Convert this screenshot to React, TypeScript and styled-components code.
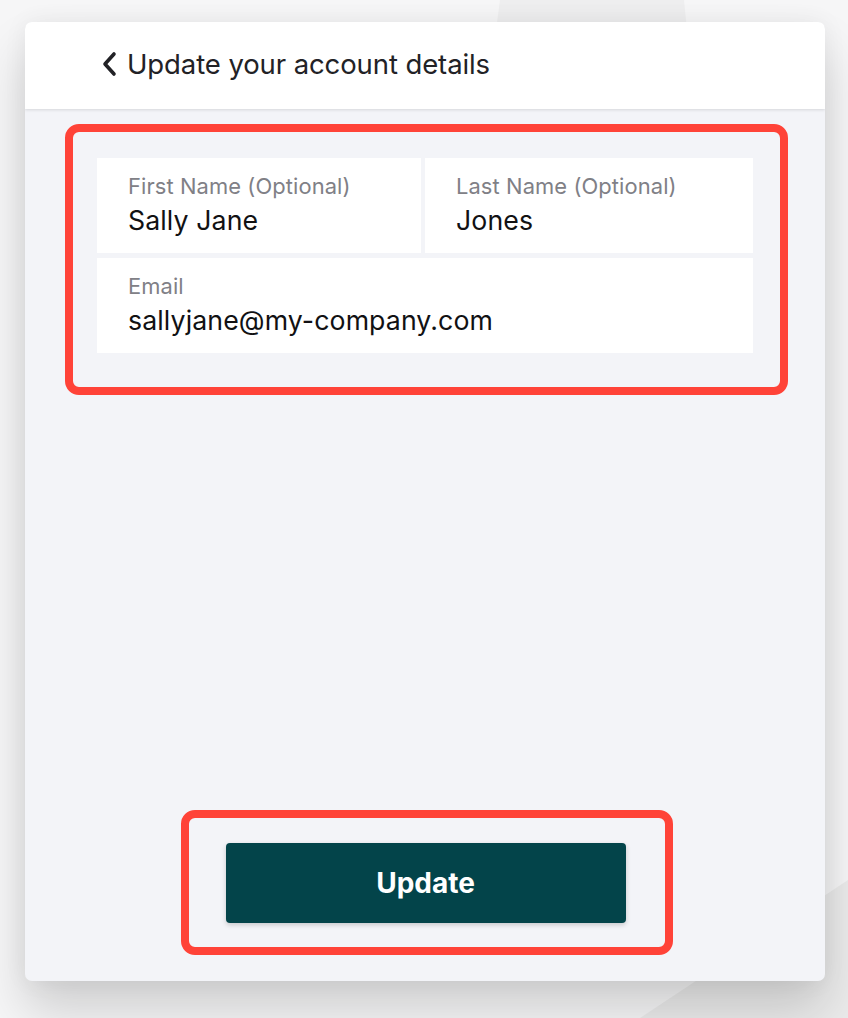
import styled, { createGlobalStyle } from 'styled-components';

const GlobalStyle = createGlobalStyle`
  html, body {
    margin: 0;
    padding: 0;
    height: 1018px;
    overflow: hidden;
    background: #f5f5f6;
    font-family: Inter, 'Noto Sans', sans-serif;
  }
`;

const Page = styled.div`
  position: relative;
  height: 1018px;
  padding: 22px 23px 0 25px;
  box-sizing: border-box;
`;

const Backdrop = styled.svg`
  position: absolute;
  inset: 0;
  width: 848px;
  height: 1018px;
  z-index: 0;
`;

const Card = styled.div`
  position: relative;
  z-index: 1;
  width: 800px;
  height: 959px;
  display: flex;
  flex-direction: column;
  border-radius: 7px;
  overflow: hidden;
  background: #f3f4f8;
  box-shadow: 0 30px 50px rgba(0, 0, 0, 0.16), 0 0 24px rgba(0, 0, 0, 0.06);
`;

const Header = styled.header`
  height: 87px;
  box-sizing: border-box;
  flex-shrink: 0;
  display: flex;
  align-items: center;
  gap: 8px;
  padding: 0 0 4px 74px;
  background: #ffffff;
  box-shadow: 0 1px 3px rgba(0, 0, 0, 0.12);
  position: relative;
  z-index: 1;
`;

const BackIcon = styled.svg`
  width: 20px;
  height: 26px;
  flex-shrink: 0;
  margin-top: 1px;
`;

const Title = styled.h1`
  margin: 0;
  font-size: 27.5px;
  font-weight: 400;
  color: #222226;
  letter-spacing: -0.1px;
`;

const Body = styled.main`
  flex: 1;
  display: flex;
  flex-direction: column;
  justify-content: space-between;
  padding: 15px 0 26px;
`;

interface HighlightProps {
  $width: number;
}

const Highlight = styled.div<HighlightProps>`
  width: ${({ $width }) => $width}px;
  box-sizing: border-box;
  border: 8px solid #ff4338;
  border-radius: 14px;
`;

const FormHighlight = styled(Highlight)`
  margin-left: 40px;
  padding: 26px 28px 34px 24px;
`;

const ButtonHighlight = styled(Highlight)`
  align-self: center;
  margin-left: 3px;
  height: 145px;
  display: flex;
  align-items: center;
  justify-content: center;
  padding-right: 2px;
`;

const FieldGrid = styled.div`
  display: grid;
  grid-template-columns: 324px 328px;
  grid-template-rows: 95px 95px;
  column-gap: 4px;
  row-gap: 5px;
`;

interface FieldProps {
  $span?: boolean;
}

const Field = styled.label<FieldProps>`
  display: flex;
  flex-direction: column;
  background: #ffffff;
  padding: 15px 31px 0;
  grid-column: ${({ $span }) => ($span ? '1 / span 2' : 'auto')};
`;

const FieldLabel = styled.span`
  font-size: 21.9px;
  line-height: 26px;
  color: #808086;
  letter-spacing: 0.1px;
`;

const FieldValue = styled.span`
  margin-top: 4px;
  font-size: 26.7px;
  line-height: 34px;
  color: #111113;
  letter-spacing: 0.1px;
`;

const UpdateButton = styled.button`
  width: 400px;
  height: 80px;
  border: none;
  border-radius: 4px;
  background: #03444a;
  color: #ffffff;
  font-family: Inter, 'Noto Sans', sans-serif;
  font-size: 28px;
  font-weight: 700;
  box-shadow: 0 2px 5px rgba(0, 0, 0, 0.18);
  cursor: pointer;
`;

const fields = [
  { label: 'First Name (Optional)', value: 'Sally Jane' },
  { label: 'Last Name (Optional)', value: 'Jones' },
  { label: 'Email', value: 'sallyjane@my-company.com', span: true },
];

export default function App() {
  return (
    <>
      <GlobalStyle />
      <Page>
        <Backdrop viewBox="0 0 848 1018" aria-hidden>
          <rect width="848" height="1018" fill="#f6f6f7" />
          <polygon points="500,0 684,0 690,60 492,60" fill="#eeeeef" />
          <polygon points="848,880 848,1018 640,1018" fill="#ebebeb" />
        </Backdrop>
        <Card>
          <Header>
            <BackIcon viewBox="0 0 20 26">
              <polyline
                points="15,3 6,13 15,23"
                fill="none"
                stroke="#222226"
                strokeWidth="3.6"
                strokeLinecap="round"
                strokeLinejoin="round"
              />
            </BackIcon>
            <Title>Update your account details</Title>
          </Header>
          <Body>
            <FormHighlight $width={723}>
              <FieldGrid>
                {fields.map((f) => (
                  <Field key={f.label} $span={f.span}>
                    <FieldLabel>{f.label}</FieldLabel>
                    <FieldValue>{f.value}</FieldValue>
                  </Field>
                ))}
              </FieldGrid>
            </FormHighlight>
            <ButtonHighlight $width={492}>
              <UpdateButton type="button">Update</UpdateButton>
            </ButtonHighlight>
          </Body>
        </Card>
      </Page>
    </>
  );
}
